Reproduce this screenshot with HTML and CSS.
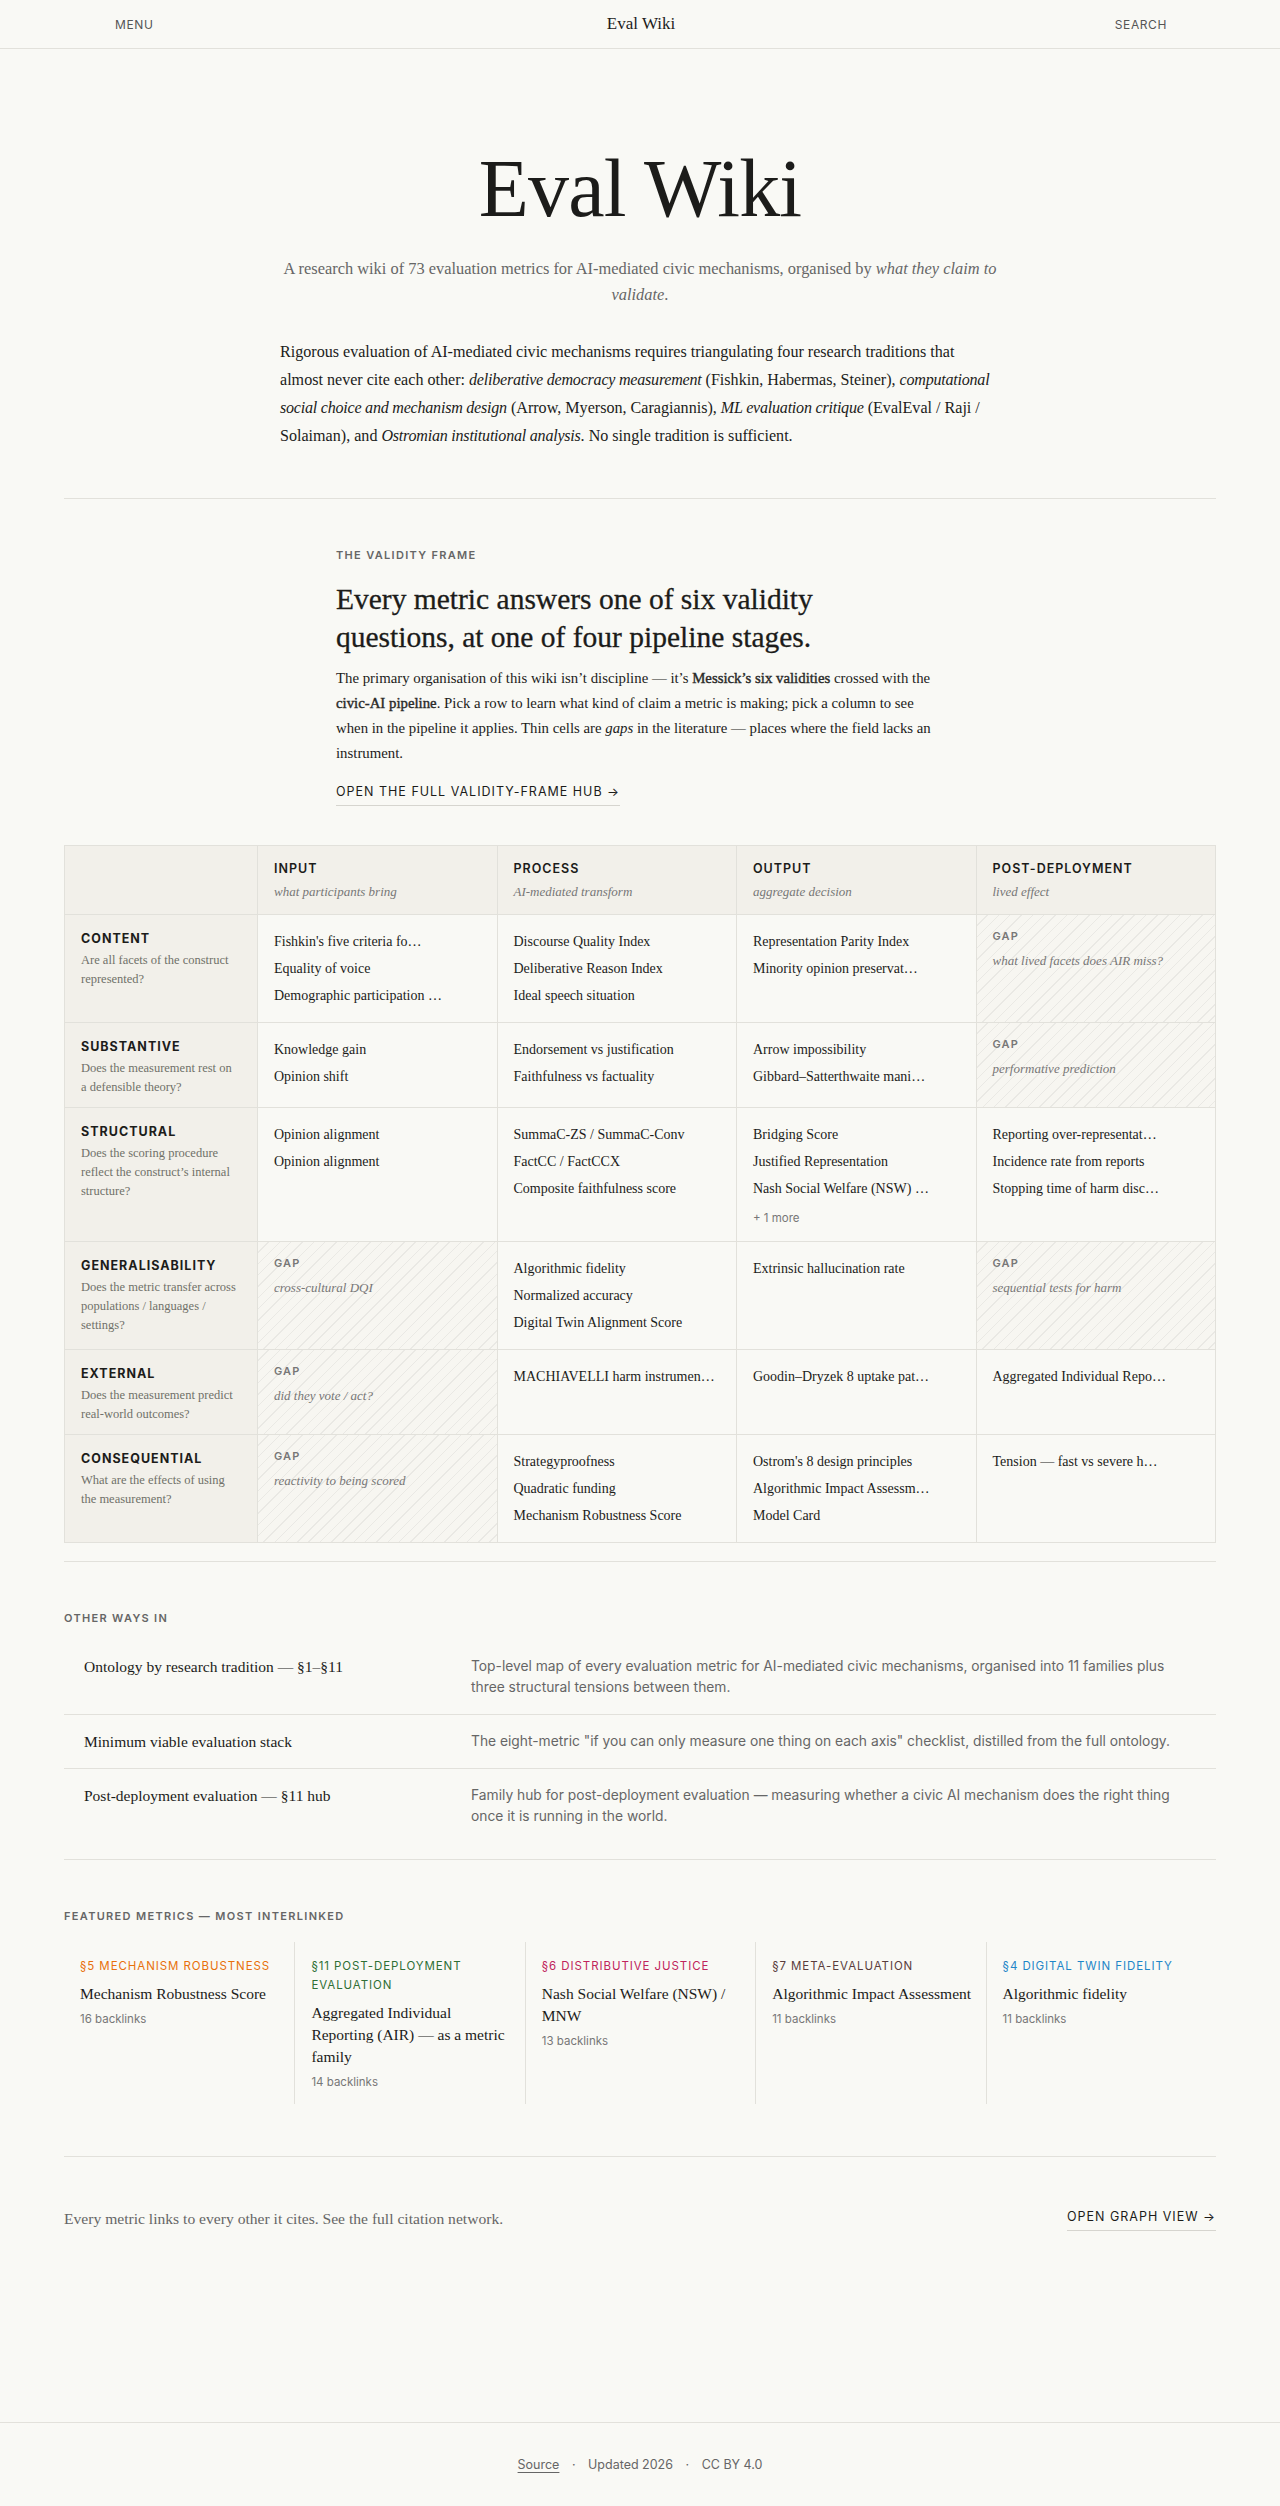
FILE: index.html
```html
<!DOCTYPE html>
<html lang="en">
<head>
    <meta charset="UTF-8">
    <meta name="viewport" content="width=device-width, initial-scale=1.0">
    <title>Eval Wiki</title>
    <link rel="stylesheet" href="styles.css">
</head>
<body>
    <header class="topbar">
        <a class="topbar-link" href="#">Menu</a>
        <a class="topbar-title" href="#">Eval Wiki</a>
        <a class="topbar-link topbar-search" href="#">Search</a>
    </header>

    <main class="page">
        <section class="hero">
            <h1>Eval Wiki</h1>
            <p class="lede">A research wiki of 73 evaluation metrics for AI-mediated civic mechanisms, organised by <em>what they claim to validate</em>.</p>
            <p class="intro">Rigorous evaluation of AI-mediated civic mechanisms requires triangulating four research traditions that almost never cite each other: <em>deliberative democracy measurement</em> (Fishkin, Habermas, Steiner), <em>computational social choice and mechanism design</em> (Arrow, Myerson, Caragiannis), <em>ML evaluation critique</em> (EvalEval / Raji / Solaiman), and <em>Ostromian institutional analysis</em>. No single tradition is sufficient.</p>
        </section>

        <hr class="rule">

        <section class="frame">
            <div class="frame-text">
                <div class="eyebrow">The validity frame</div>
                <h2>Every metric answers one of six validity questions, at one of four pipeline stages.</h2>
                <p>The primary organisation of this wiki isn’t discipline — it’s <a class="strong" href="#">Messick’s six validities</a> crossed with the <a class="strong" href="#">civic-AI pipeline</a>. Pick a row to learn what kind of claim a metric is making; pick a column to see when in the pipeline it applies. Thin cells are <em>gaps</em> in the literature — places where the field lacks an instrument.</p>
                <a class="cta" href="#">Open the full validity-frame hub →</a>
            </div>

            <div class="matrix">
                <div class="m-head m-corner"></div>
                <div class="m-head"><b>Input</b><i>what participants bring</i></div>
                <div class="m-head"><b>Process</b><i>AI-mediated transform</i></div>
                <div class="m-head"><b>Output</b><i>aggregate decision</i></div>
                <div class="m-head"><b>Post-deployment</b><i>lived effect</i></div>

                <!-- content -->
                <div class="m-row"><b>Content</b><span>Are all facets of the construct represented?</span></div>
                <div class="m-cell">
                    <a href="#">Fishkin's five criteria fo…</a>
                    <a href="#">Equality of voice</a>
                    <a href="#">Demographic participation …</a>
                </div>
                <div class="m-cell">
                    <a href="#">Discourse Quality Index</a>
                    <a href="#">Deliberative Reason Index</a>
                    <a href="#">Ideal speech situation</a>
                </div>
                <div class="m-cell">
                    <a href="#">Representation Parity Index</a>
                    <a href="#">Minority opinion preservat…</a>
                </div>
                <div class="m-gap"><span class="gap-tag">Gap</span><i class="gap-note">what lived facets does AIR miss?</i></div>

                <!-- substantive -->
                <div class="m-row"><b>Substantive</b><span>Does the measurement rest on a&nbsp;defensible theory?</span></div>
                <div class="m-cell">
                    <a href="#">Knowledge gain</a>
                    <a href="#">Opinion shift</a>
                </div>
                <div class="m-cell">
                    <a href="#">Endorsement vs justification</a>
                    <a href="#">Faithfulness vs factuality</a>
                </div>
                <div class="m-cell">
                    <a href="#">Arrow impossibility</a>
                    <a href="#">Gibbard–Satterthwaite mani…</a>
                </div>
                <div class="m-gap"><span class="gap-tag">Gap</span><i class="gap-note">performative prediction</i></div>

                <!-- structural -->
                <div class="m-row"><b>Structural</b><span>Does the scoring procedure reflect the construct’s internal structure?</span></div>
                <div class="m-cell">
                    <a href="#">Opinion alignment</a>
                    <a href="#">Opinion alignment</a>
                </div>
                <div class="m-cell">
                    <a href="#">SummaC-ZS / SummaC-Conv</a>
                    <a href="#">FactCC / FactCCX</a>
                    <a href="#">Composite faithfulness score</a>
                </div>
                <div class="m-cell">
                    <a href="#">Bridging Score</a>
                    <a href="#">Justified Representation</a>
                    <a href="#">Nash Social Welfare (NSW) …</a>
                    <span class="more">+ 1 more</span>
                </div>
                <div class="m-cell">
                    <a href="#">Reporting over-representat…</a>
                    <a href="#">Incidence rate from reports</a>
                    <a href="#">Stopping time of harm disc…</a>
                </div>

                <!-- generalisability -->
                <div class="m-row"><b>Generalisability</b><span>Does the metric transfer across populations / languages / settings?</span></div>
                <div class="m-gap"><span class="gap-tag">Gap</span><i class="gap-note">cross-cultural DQI</i></div>
                <div class="m-cell">
                    <a href="#">Algorithmic fidelity</a>
                    <a href="#">Normalized accuracy</a>
                    <a href="#">Digital Twin Alignment Score</a>
                </div>
                <div class="m-cell">
                    <a href="#">Extrinsic hallucination rate</a>
                </div>
                <div class="m-gap"><span class="gap-tag">Gap</span><i class="gap-note">sequential tests for harm</i></div>

                <!-- external -->
                <div class="m-row"><b>External</b><span>Does the measurement predict real-world outcomes?</span></div>
                <div class="m-gap"><span class="gap-tag">Gap</span><i class="gap-note">did they vote / act?</i></div>
                <div class="m-cell">
                    <a href="#">MACHIAVELLI harm instrumen…</a>
                </div>
                <div class="m-cell">
                    <a href="#">Goodin–Dryzek 8 uptake pat…</a>
                </div>
                <div class="m-cell">
                    <a href="#">Aggregated Individual Repo…</a>
                </div>

                <!-- consequential -->
                <div class="m-row"><b>Consequential</b><span>What are the effects of using the&nbsp;measurement?</span></div>
                <div class="m-gap"><span class="gap-tag">Gap</span><i class="gap-note">reactivity to being scored</i></div>
                <div class="m-cell">
                    <a href="#">Strategyproofness</a>
                    <a href="#">Quadratic funding</a>
                    <a href="#">Mechanism Robustness Score</a>
                </div>
                <div class="m-cell">
                    <a href="#">Ostrom's 8 design principles</a>
                    <a href="#">Algorithmic Impact Assessm…</a>
                    <a href="#">Model Card</a>
                </div>
                <div class="m-cell">
                    <a href="#">Tension — fast vs severe h…</a>
                </div>
            </div>
        </section>

        <hr class="rule">

        <section class="ways">
            <div class="eyebrow">Other ways in</div>
            <div class="way-list">
                <a class="way" href="#">
                    <span class="way-title">Ontology by research tradition — §1–§11</span>
                    <span class="way-desc">Top-level map of every evaluation metric for AI-mediated civic mechanisms, organised into 11 families plus three structural tensions between them.</span>
                </a>
                <a class="way" href="#">
                    <span class="way-title">Minimum viable evaluation stack</span>
                    <span class="way-desc">The eight-metric "if you can only measure one thing on each axis" checklist, distilled from the full ontology.</span>
                </a>
                <a class="way" href="#">
                    <span class="way-title">Post-deployment evaluation — §11 hub</span>
                    <span class="way-desc">Family hub for post-deployment evaluation — measuring whether a civic AI mechanism does the right thing once it is running in the world.</span>
                </a>
            </div>
        </section>

        <section class="featured">
            <div class="eyebrow">Featured metrics — most interlinked</div>
            <div class="cards">
                <a class="card" href="#">
                    <span class="card-cat cat-robust">§5 Mechanism robustness</span>
                    <span class="card-title">Mechanism Robustness Score</span>
                    <span class="card-links">16 backlinks</span>
                </a>
                <a class="card" href="#">
                    <span class="card-cat cat-post">§11 Post-deployment evaluation</span>
                    <span class="card-title">Aggregated Individual Reporting (AIR) — as a metric family</span>
                    <span class="card-links">14 backlinks</span>
                </a>
                <a class="card" href="#">
                    <span class="card-cat cat-justice">§6 Distributive justice</span>
                    <span class="card-title">Nash Social Welfare (NSW) / MNW</span>
                    <span class="card-links">13 backlinks</span>
                </a>
                <a class="card" href="#">
                    <span class="card-cat cat-meta">§7 Meta-evaluation</span>
                    <span class="card-title">Algorithmic Impact Assessment</span>
                    <span class="card-links">11 backlinks</span>
                </a>
                <a class="card" href="#">
                    <span class="card-cat cat-twin">§4 Digital twin fidelity</span>
                    <span class="card-title">Algorithmic fidelity</span>
                    <span class="card-links">11 backlinks</span>
                </a>
            </div>
        </section>

        <hr class="rule">

        <div class="graph-row">
            <p>Every metric links to every other it cites. See the full citation network.</p>
            <a class="cta" href="#">Open graph view →</a>
        </div>
    </main>

    <footer class="footer">
        <a class="footer-source" href="#">Source</a>
        <span class="dot">·</span>
        <span>Updated 2026</span>
        <span class="dot">·</span>
        <span>CC BY 4.0</span>
    </footer>
</body>
</html>
```

FILE: styles.css
```css
* {
    box-sizing: border-box;
}
html, body {
    margin: 0;
}
body {
    min-height: 100vh;
    display: flex;
    flex-direction: column;
    background: #f9f9f5;
    color: #1c1c1a;
    font-family: "Liberation Serif", "Times New Roman", serif;
}
a {
    color: inherit;
    text-decoration: none;
}

/* top bar */
.topbar {
    height: 49px;
    border-bottom: 1px solid #e2e1db;
    display: grid;
    grid-template-columns: 1fr auto 1fr;
    align-items: center;
    padding: 0 113px 0 115px;
}
.topbar-link {
    font-family: Inter, "Liberation Sans", sans-serif;
    font-size: 12px;
    letter-spacing: 0.05em;
    text-transform: uppercase;
    color: #555;
}
.topbar-search {
    justify-self: end;
}
.topbar-title {
    font-size: 17px;
}

.page {
    flex: 1;
    padding: 0 64px;
}
.rule {
    border: 0;
    border-top: 1px solid #e2e1db;
    margin: 0;
}
.eyebrow {
    font-family: Inter, "Liberation Sans", sans-serif;
    font-size: 11px;
    font-weight: 600;
    letter-spacing: 0.12em;
    line-height: 16px;
    text-transform: uppercase;
    color: #666;
}
.cta {
    display: inline-block;
    font-family: Inter, "Liberation Sans", sans-serif;
    font-size: 12.5px;
    letter-spacing: 0.08em;
    line-height: 18px;
    text-transform: uppercase;
    padding-bottom: 4px;
    border-bottom: 1px solid #d6d5cf;
}

/* hero */
.hero {
    text-align: center;
    padding: 95px 0 48px;
}
.hero h1 {
    margin: 0;
    font-size: 82px;
    font-weight: 400;
    line-height: 90px;
    letter-spacing: -0.01em;
}
.lede {
    max-width: 720px;
    margin: 22px auto 0;
    font-size: 16.4px;
    line-height: 26px;
    color: #666;
}
.intro {
    max-width: 720px;
    margin: 30px auto 0;
    text-align: left;
    font-size: 16.1px;
    line-height: 28px;
}
.intro em {
    letter-spacing: -0.015em;
}

/* validity frame */
.frame {
    padding: 48px 0 18px;
}
.frame-text {
    max-width: 608px;
    margin: 0 auto 39px;
}
.frame h2 {
    margin: 17px 0 0;
    max-width: 570px;
    font-size: 29.5px;
    font-weight: 400;
    line-height: 38px;
    -webkit-text-stroke: 0.3px #1c1c1a;
}
.frame p {
    margin: 10px 0 16px;
    font-size: 14.8px;
    line-height: 25px;
}
.strong {
    color: #2a2a28;
    -webkit-text-stroke: 0.4px #2a2a28;
}

.matrix {
    display: grid;
    grid-template-columns: 193px repeat(4, 1fr);
    border-top: 1px solid #e2e1db;
    border-left: 1px solid #e2e1db;
}
.matrix > div {
    border-right: 1px solid #e2e1db;
    border-bottom: 1px solid #e2e1db;
}
.m-head {
    background: #f2f0ea;
    padding: 14px 16px 12px;
}
.m-head b {
    display: block;
    font-family: Inter, "Liberation Sans", sans-serif;
    font-size: 12.5px;
    font-weight: 600;
    letter-spacing: 0.08em;
    line-height: 18px;
    text-transform: uppercase;
}
.m-head i {
    display: block;
    margin-top: 4px;
    font-size: 13px;
    line-height: 20px;
    color: #777;
}
.m-row {
    background: #f2f0ea;
    padding: 16px 12px 10px 16px;
}
.m-row b {
    display: block;
    font-family: Inter, "Liberation Sans", sans-serif;
    font-size: 12.5px;
    font-weight: 700;
    letter-spacing: 0.08em;
    line-height: 16px;
    text-transform: uppercase;
}
.m-row span {
    display: block;
    margin-top: 4px;
    font-size: 12.5px;
    line-height: 19px;
    color: #707069;
}
.m-cell {
    display: flex;
    flex-direction: column;
    align-items: flex-start;
    gap: 5px;
    padding: 16px 16px 15px;
}
.m-cell a {
    font-size: 14px;
    line-height: 22px;
}
.more {
    margin-top: 5px;
    font-family: Inter, "Liberation Sans", sans-serif;
    font-size: 11.5px;
    line-height: 16px;
    color: #777;
}
.m-gap {
    padding: 14px 16px;
    background-color: #f7f6f1;
    background-image: repeating-linear-gradient(135deg, transparent 0 7px, rgba(0, 0, 0, 0.055) 7px 8px);
}
.gap-tag {
    display: block;
    font-family: Inter, "Liberation Sans", sans-serif;
    font-size: 11px;
    font-weight: 600;
    letter-spacing: 0.1em;
    line-height: 14px;
    text-transform: uppercase;
    color: #777;
}
.gap-note {
    display: block;
    margin-top: 8px;
    font-size: 13px;
    line-height: 20px;
    color: #777;
}

/* other ways in */
.ways {
    padding: 48px 0 16px;
    border-bottom: 1px solid #e2e1db;
}
.way-list {
    margin-top: 14px;
}
.way {
    display: grid;
    grid-template-columns: 366px 1fr;
    column-gap: 21px;
    padding: 16px 20px;
    border-bottom: 1px solid #e2e1db;
}
.way:last-child {
    border-bottom: 0;
}
.way-title {
    font-size: 15.5px;
    line-height: 21px;
}
.way-desc {
    font-family: Inter, "Liberation Sans", sans-serif;
    font-size: 13.8px;
    line-height: 21px;
    color: #666;
}

/* featured */
.featured {
    padding: 48px 0 52px;
}
.cards {
    display: grid;
    grid-template-columns: repeat(5, 1fr);
    margin-top: 18px;
}
.card {
    display: flex;
    flex-direction: column;
    padding: 15px 12px 14px 16px;
    border-left: 1px solid #e2e1db;
}
.card:first-child {
    border-left: 0;
}
.card-cat {
    font-family: Inter, "Liberation Sans", sans-serif;
    font-size: 11.5px;
    letter-spacing: 0.08em;
    line-height: 19px;
    text-transform: uppercase;
}
.card-title {
    margin-top: 7px;
    font-size: 15.5px;
    line-height: 22px;
}
.card-links {
    margin-top: 6px;
    font-family: Inter, "Liberation Sans", sans-serif;
    font-size: 11.5px;
    line-height: 16px;
    color: #777;
}
.cat-robust { color: #e8700c; }
.cat-post { color: #2f6f35; }
.cat-justice { color: #c0245c; }
.cat-meta { color: #5a3d3d; }
.cat-twin { color: #1f86c8; }

.graph-row {
    display: flex;
    justify-content: space-between;
    align-items: center;
    padding-top: 50px;
}
.graph-row p {
    margin: 0;
    font-size: 15.6px;
    line-height: 24px;
    color: #666;
}

/* footer */
.footer {
    border-top: 1px solid #e2e1db;
    padding: 33px 0 32px;
    text-align: center;
    font-family: Inter, "Liberation Sans", sans-serif;
    font-size: 12.5px;
    line-height: 18px;
    color: #666;
}
.footer-source {
    text-decoration: underline;
    text-underline-offset: 3px;
}
.dot {
    margin: 0 9px;
}
```
